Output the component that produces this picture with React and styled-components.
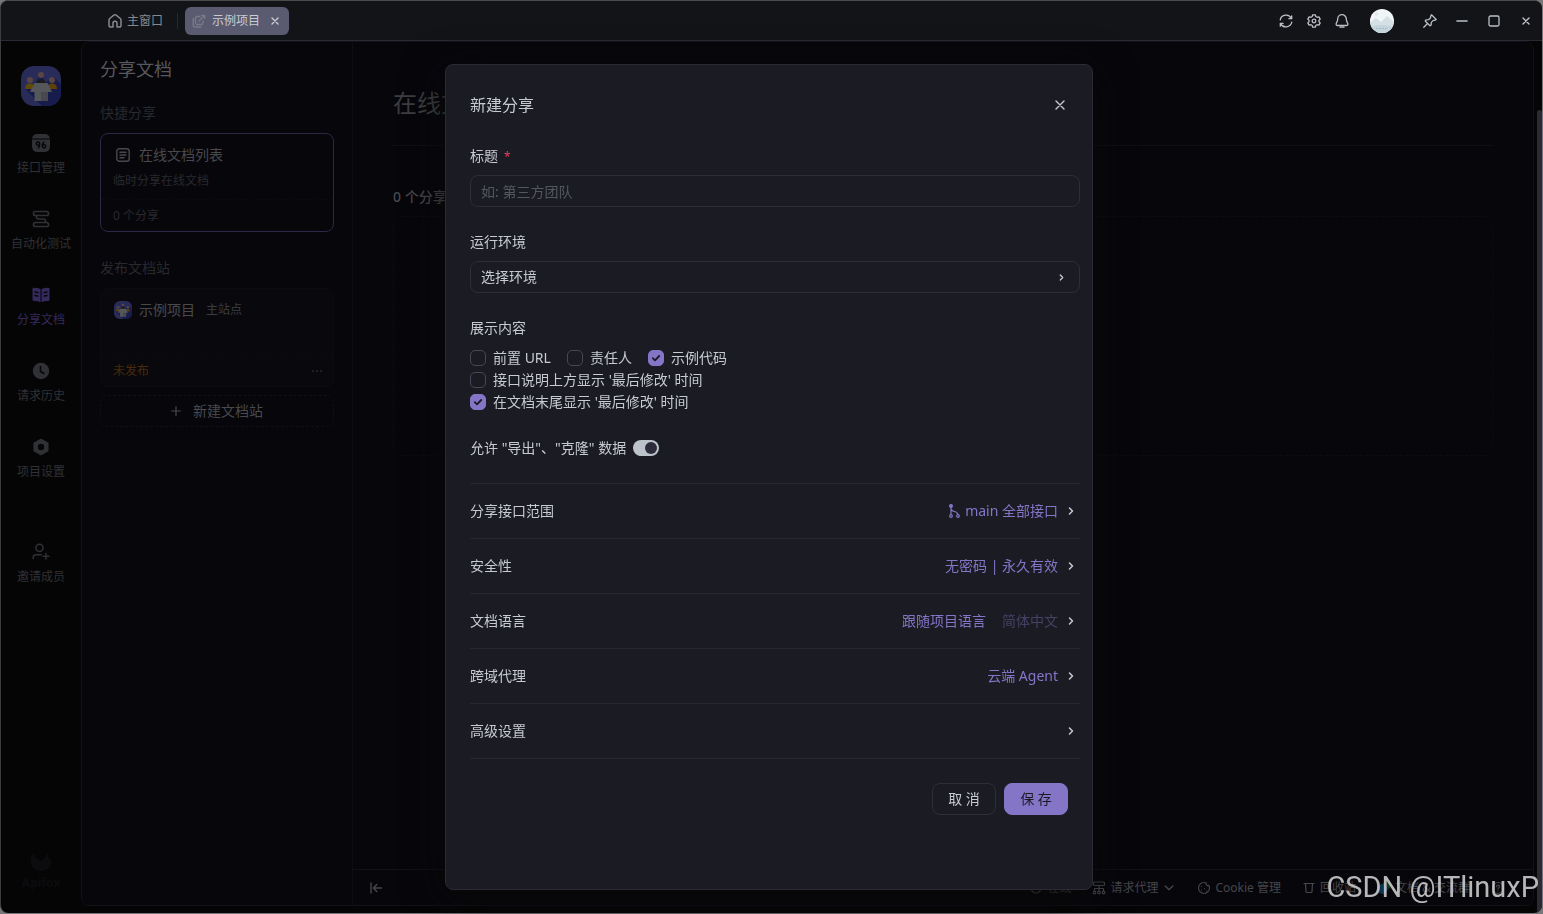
import { useState } from "react";
import styled, { createGlobalStyle } from "styled-components";

const navItems = [
  { key: "api", label: "接口管理", icon: <ApiIcon /> },
  { key: "test", label: "自动化测试", icon: <TestIcon /> },
  { key: "share", label: "分享文档", icon: <BookIcon />, active: true },
  { key: "history", label: "请求历史", icon: <ClockIcon /> },
  { key: "settings", label: "项目设置", icon: <HexIcon /> },
];

function App() {
  return (
    <>
      <GlobalStyle />
      <Window>
        <TitleBar />
        <Body>
          <SideNav />
          <Panel>
            <DocSidebar />
            <MainArea />
          </Panel>
          <ScrollTrack>
            <ScrollThumb />
          </ScrollTrack>
        </Body>
      </Window>
      <Overlay>
        <ShareDialog />
      </Overlay>
      <Watermark>CSDN @ITlinuxP</Watermark>
    </>
  );
}

function TitleBar() {
  return (
    <TitleBarWrapper>
      <Tabs>
        <HomeTab>
          <HomeIcon />
          主窗口
        </HomeTab>
        <TabDivider />
        <ProjectTab>
          <OpenIcon />
          <span>示例项目</span>
          <PlainButton aria-label="关闭标签">
            <CloseIcon size={8} />
          </PlainButton>
        </ProjectTab>
      </Tabs>
      <Actions>
        <ActionGroup>
          <PlainButton aria-label="刷新">
            <RefreshIcon />
          </PlainButton>
          <PlainButton aria-label="设置">
            <GearIcon />
          </PlainButton>
          <PlainButton aria-label="通知">
            <BellIcon />
          </PlainButton>
        </ActionGroup>
        <AvatarButton aria-label="账号">
          <AvatarPicture />
        </AvatarButton>
        <WindowButtons>
          <PlainButton aria-label="置顶">
            <PinIcon />
          </PlainButton>
          <PlainButton aria-label="最小化">
            <MinIcon />
          </PlainButton>
          <PlainButton aria-label="最大化">
            <MaxIcon />
          </PlainButton>
          <PlainButton aria-label="关闭">
            <CloseIcon size={8} />
          </PlainButton>
        </WindowButtons>
      </Actions>
    </TitleBarWrapper>
  );
}

function SideNav() {
  return (
    <Nav>
      <ProjectLogo size={40} />
      <NavList>
        {navItems.map((item) => (
          <NavButton key={item.key} $active={item.active}>
            {item.icon}
            <span>{item.label}</span>
          </NavButton>
        ))}
      </NavList>
      <NavButton>
        <InviteIcon />
        <span>邀请成员</span>
      </NavButton>
      <Brand>
        <FoxIcon />
        <span>Apifox</span>
      </Brand>
    </Nav>
  );
}

function DocSidebar() {
  return (
    <Sidebar>
      <SidebarTitle>分享文档</SidebarTitle>
      <GroupTitle>快捷分享</GroupTitle>
      <Card $selected>
        <CardTop>
          <CardName>
            <IconBox>
              <DocIcon />
            </IconBox>
            在线文档列表
          </CardName>
          <CardHint>临时分享在线文档</CardHint>
        </CardTop>
        <CardBottom>0 个分享</CardBottom>
      </Card>
      <GroupTitle $spaced>发布文档站</GroupTitle>
      <Card>
        <CardTop>
          <CardName>
            <ProjectLogo size={18} />
            示例项目
            <SiteTag>主站点</SiteTag>
          </CardName>
        </CardTop>
        <CardBottom>
          <Unpublished>未发布</Unpublished>
          <PlainButton aria-label="更多">
            <DotsIcon />
          </PlainButton>
        </CardBottom>
      </Card>
      <NewSiteButton>
        <PlusIcon />
        新建文档站
      </NewSiteButton>
    </Sidebar>
  );
}

function MainArea() {
  return (
    <Main>
      <Content>
        <PageTitle>在线文档列表</PageTitle>
        <ShareCount>0 个分享</ShareCount>
        <EmptyBox />
      </Content>
      <Footer>
        <PlainButton aria-label="收起侧栏">
          <CollapseIcon />
        </PlainButton>
        <FooterItems>
          <FooterButton>
            <OnlineIcon />
            在线
          </FooterButton>
          <FooterButton>
            <ProxyIcon />
            请求代理
            <FooterArrow>
              <ChevronDown />
            </FooterArrow>
          </FooterButton>
          <FooterButton>
            <CookieIcon />
            Cookie 管理
          </FooterButton>
          <FooterButton>
            <TrashIcon />
            回收站
          </FooterButton>
          <FooterButton>
            <CommunityIcon />
            文档 &amp; 交流群
          </FooterButton>
          <FooterButton aria-label="帮助">
            <HelpIcon />
          </FooterButton>
        </FooterItems>
      </Footer>
    </Main>
  );
}

function ShareDialog() {
  const [exportable, setExportable] = useState(true);

  return (
    <Dialog role="dialog" aria-labelledby="share-title">
      <DialogHeader>
        <DialogTitle id="share-title">新建分享</DialogTitle>
        <CloseButton aria-label="关闭">
          <CloseIcon size={10} />
        </CloseButton>
      </DialogHeader>

      <Field>
        <FieldLabel htmlFor="share-name">
          标题<Required>*</Required>
        </FieldLabel>
        <TextInput id="share-name" placeholder="如: 第三方团队" />
      </Field>

      <Field>
        <FieldLabel htmlFor="share-env">运行环境</FieldLabel>
        <SelectBox>
          <Select id="share-env" defaultValue="">
            <option value="">选择环境</option>
          </Select>
          <SelectArrow>
            <ChevronRight size={5} />
          </SelectArrow>
        </SelectBox>
      </Field>

      <Fieldset>
        <Legend>展示内容</Legend>
        <CheckRow>
          <CheckOption label="前置 URL" />
          <CheckOption label="责任人" />
          <CheckOption label="示例代码" checked />
        </CheckRow>
        <CheckRow>
          <CheckOption label="接口说明上方显示 '最后修改' 时间" />
        </CheckRow>
        <CheckRow>
          <CheckOption label="在文档末尾显示 '最后修改' 时间" checked />
        </CheckRow>
      </Fieldset>

      <SwitchLabel>
        允许 "导出"、"克隆" 数据
        <Switch
          type="checkbox"
          role="switch"
          checked={exportable}
          onChange={(e) => setExportable(e.target.checked)}
        />
      </SwitchLabel>

      <Settings>
        <SettingRow label="分享接口范围">
          <BranchIcon />
          <span>main 全部接口</span>
        </SettingRow>
        <SettingRow label="安全性">
          <span>无密码 | 永久有效</span>
        </SettingRow>
        <SettingRow label="文档语言">
          <span>跟随项目语言</span>
          <Muted>简体中文</Muted>
        </SettingRow>
        <SettingRow label="跨域代理">
          <span>云端 Agent</span>
        </SettingRow>
        <SettingRow label="高级设置" />
      </Settings>

      <DialogFooter>
        <Button>取 消</Button>
        <Button $primary>保 存</Button>
      </DialogFooter>
    </Dialog>
  );
}

function CheckOption({ label, checked = false }) {
  const [on, setOn] = useState(checked);
  return (
    <CheckLabel>
      <CheckWrap>
        <Checkbox
          type="checkbox"
          checked={on}
          onChange={(e) => setOn(e.target.checked)}
        />
        {on && <CheckMark />}
      </CheckWrap>
      {label}
    </CheckLabel>
  );
}

function SettingRow({ label, children }) {
  return (
    <SettingButton>
      <span>{label}</span>
      <SettingValue>
        {children}
        <RowArrow>
          <ChevronRight size={6} />
        </RowArrow>
      </SettingValue>
    </SettingButton>
  );
}

/* icons */

function Svg({ size = 14, width = 1.2, children }) {
  return (
    <svg
      width={size}
      height={size}
      viewBox={`0 0 ${size} ${size}`}
      fill="none"
      stroke="currentColor"
      strokeWidth={width}
      strokeLinecap="round"
      strokeLinejoin="round"
      aria-hidden="true"
    >
      {children}
    </svg>
  );
}

function HomeIcon() {
  return (
    <Svg width={1.5}>
      <path d="M5 13H2.8Q1 13 1 11.2V6Q1 5.1 1.7 4.5L5.8 1.2Q7 .4 8.2 1.2L12.3 4.5Q13 5.1 13 6V11.2Q13 13 11.2 13H9V9.2A2 2 0 0 0 5 9.2Z" />
    </Svg>
  );
}

function OpenIcon() {
  return (
    <Svg width={1.3}>
      <path d="M8 2.5H5Q3.5 2.5 3.5 4V9Q3.5 10.5 5 10.5H9.5Q11 10.5 11 9V7M1.2 4.5V11Q1.2 13 3.2 13H9M7 7L12.5 1.5M9.5 1.3H12.7V4.5" />
    </Svg>
  );
}

function CloseIcon({ size }) {
  const end = size - 1;
  return (
    <Svg size={size} width={1.4}>
      <path d={`M1 1L${end} ${end}M${end} 1L1 ${end}`} />
    </Svg>
  );
}

function RefreshIcon() {
  return (
    <Svg width={1.3}>
      <path d="M1.2 5.8A6 6 0 0 1 12.4 4.4M12.8 8.2A6 6 0 0 1 1.6 9.6M12.7 1.8V4.7H9.9M1.3 12.2V9.3H4.1" />
    </Svg>
  );
}

function GearIcon() {
  return (
    <Svg width={1.3}>
      <path d="M5.7.8H8.3L8.8 2.5L10.1 3.3L11.9 2.9L13.2 5.1L12 6.3V7.7L13.2 8.9L11.9 11.1L10.1 10.7L8.8 11.5L8.3 13.2H5.7L5.2 11.5L3.9 10.7L2.1 11.1L.8 8.9L2 7.7V6.3L.8 5.1L2.1 2.9L3.9 3.3L5.2 2.5Z" />
      <circle cx="7" cy="7" r="1.8" />
    </Svg>
  );
}

function BellIcon() {
  return (
    <Svg width={1.3}>
      <path d="M2.7 5A4.3 4.3 0 0 1 11.3 5C11.3 8 12.9 8.4 12.9 10.2Q12.9 11.5 11.5 11.5H2.5Q1.1 11.5 1.1 10.2C1.1 8.4 2.7 8 2.7 5ZM5 13.2H9" />
    </Svg>
  );
}

function AvatarPicture() {
  return (
    <svg width="24" height="24" viewBox="0 0 24 24" aria-hidden="true">
      <defs>
        <clipPath id="avatar-clip">
          <circle cx="12" cy="12" r="12" />
        </clipPath>
      </defs>
      <g clipPath="url(#avatar-clip)">
        <rect width="24" height="24" fill="#f0f5f7" />
        <circle cx="6.5" cy="5" r="1.8" fill="#dfe8ec" />
        <path d="M0 14L6 9L11 13L17 7L24 13V24H0Z" fill="#d4e0e6" />
        <path d="M0 18Q12 14 24 18V24H0Z" fill="#c3d4dd" />
        <path d="M6 19.5H18" stroke="#a7bbc6" strokeWidth="1" strokeDasharray="2 1" />
      </g>
    </svg>
  );
}

function PinIcon() {
  return (
    <Svg width={1.3}>
      <path d="M8.5.8L13.2 5.5L12 6.3L10.3 6.4L8.3 8.4L8.2 11L7 11.8L2.2 7L3 5.8L5.6 5.7L7.6 3.7L7.7 2ZM4.5 9.5L.8 13.2" />
    </Svg>
  );
}

function MinIcon() {
  return (
    <Svg size={12} width={1.6}>
      <path d="M1 6H11" />
    </Svg>
  );
}

function MaxIcon() {
  return (
    <Svg size={12} width={1.3}>
      <rect x="1" y="1" width="10" height="10" rx="1.5" />
    </Svg>
  );
}

function ProjectLogo({ size }) {
  const id = `logo-clip-${size}`;
  return (
    <svg width={size} height={size} viewBox="0 0 40 40" aria-hidden="true">
      <defs>
        <clipPath id={id}>
          <rect width="40" height="40" rx="13" />
        </clipPath>
      </defs>
      <g clipPath={`url(#${id})`}>
        <rect width="40" height="40" fill="#292c58" />
        <path d="M4 23L21 40H40V18L33 11L24 17L20 6L12 22Z" fill="#171c4c" />
        <circle cx="20" cy="9" r="3" fill="#594644" />
        <circle cx="9" cy="14" r="3" fill="#594644" />
        <circle cx="31" cy="14" r="3" fill="#594644" />
        <path d="M15 19Q15 13 20 13Q25 13 25 19Z" fill="#191b21" />
        <path d="M4 23Q4 17.5 9 17.5Q13 17.5 13.5 20L11.5 23Z" fill="#5f4b05" />
        <path d="M36 23Q36 17.5 31 17.5Q27 17.5 26.5 20L28.5 23Z" fill="#5f4005" />
        <path d="M13.5 17H26.5L31 26H27V35H13.5V26H9Z" fill="#55575b" />
        <path d="M20 26H27V35H20Z" fill="#48494e" />
      </g>
    </svg>
  );
}

function ApiIcon() {
  return (
    <svg width="18" height="18" viewBox="0 0 18 18" fill="none" aria-hidden="true">
      <path d="M0 4.500Q1 0 5 0H13Q17 0 18 4.500Z" fill="currentColor" />
      <path d="M0 5.500H18V12Q18 18 12 18H6Q0 18 0 12Z" fill="currentColor" />
      <g stroke="#060607" strokeWidth="1.4">
        <circle cx="6" cy="9.7" r="1.7" />
        <path d="M7.7 9.7Q7.7 12.5 6 14.3" />
        <circle cx="12" cy="12.3" r="1.7" />
        <path d="M10.3 12.3Q10.3 9.5 12.3 7.7" />
      </g>
    </svg>
  );
}

function TestIcon() {
  return (
    <Svg size={18} width={1.6}>
      <rect x="1.5" y="1.5" width="15" height="4" rx="1.8" />
      <rect x="1.5" y="12.5" width="15" height="4" rx="1.8" />
      <path d="M4.500 5.500V7Q4.500 9 6.500 9H11.500Q13.500 9 13.500 11V12.500" />
    </Svg>
  );
}

function BookIcon() {
  return (
    <svg width="18" height="18" viewBox="0 0 18 18" aria-hidden="true">
      <path
        d="M.5 3Q.5 1.8 2 1.8Q6 1.8 8.5 3V16.2Q6 15 2 15Q.5 15 .5 13.5ZM9.5 3Q12 1.8 16 1.8Q17.5 1.8 17.5 3V13.5Q17.5 15 16 15Q12 15 9.5 16.2Z"
        fill="currentColor"
      />
      <path
        d="M3 6L6 6.7M3 9.5L6 10.2M15 6L12 6.7M15 9.5L12 10.2"
        stroke="#060607"
        strokeWidth="1.3"
        strokeLinecap="round"
      />
    </svg>
  );
}

function ClockIcon() {
  return (
    <svg width="18" height="18" viewBox="0 0 18 18" fill="none" aria-hidden="true">
      <circle cx="9" cy="9" r="8.2" fill="currentColor" />
      <path d="M8.5 4.5V9.5L12 11.5" stroke="#060607" strokeWidth="1.5" strokeLinecap="round" />
    </svg>
  );
}

function HexIcon() {
  return (
    <svg width="18" height="18" viewBox="0 0 18 18" aria-hidden="true">
      <path
        d="M9 1.5L15.8 5.2V12.8L9 16.5L2.2 12.8V5.2Z"
        fill="currentColor"
        stroke="currentColor"
        strokeWidth="1.5"
        strokeLinejoin="round"
      />
      <circle cx="9" cy="9" r="3.2" fill="#060607" />
    </svg>
  );
}

function InviteIcon() {
  return (
    <Svg size={18} width={1.5}>
      <circle cx="7.5" cy="4.8" r="3.6" />
      <path d="M1.2 15.5V14.5Q1.2 11.7 4 11.7H9.5M14 10.5V16M11.2 13.3H16.8" />
    </Svg>
  );
}

function FoxIcon() {
  return (
    <svg width="22" height="22" viewBox="0 0 22 22" aria-hidden="true">
      <path
        d="M4 2Q5 8 9 10Q14 12 16 5L19 3L18 7L21 10Q22 16 17 19.5Q11 23 5 19Q-1 14 1 7Z"
        fill="currentColor"
      />
    </svg>
  );
}

function DocIcon() {
  return (
    <Svg width={1.4}>
      <rect x=".8" y=".8" width="12.4" height="12.4" rx="2.5" />
      <path d="M4 4.2H10M4 7H10M4 9.8H8" />
    </Svg>
  );
}

function DotsIcon() {
  return (
    <svg width="12" height="4" viewBox="0 0 12 4" fill="currentColor" aria-hidden="true">
      <circle cx="2" cy="2" r="1" />
      <circle cx="6" cy="2" r="1" />
      <circle cx="10" cy="2" r="1" />
    </svg>
  );
}

function PlusIcon() {
  return (
    <Svg size={10} width={1.2}>
      <path d="M5 .6V9.4M.6 5H9.4" />
    </Svg>
  );
}

function CollapseIcon() {
  return (
    <Svg width={1.4}>
      <path d="M2 2V12M12.5 7H4.5M7.8 3.5L4.3 7L7.8 10.5" />
    </Svg>
  );
}

function OnlineIcon() {
  return (
    <Svg>
      <circle cx="7" cy="7" r="5" />
    </Svg>
  );
}

function ProxyIcon() {
  return (
    <Svg>
      <rect x="1.5" y="1" width="11" height="3.5" rx="1" />
      <path d="M7 4.5V7.5M2.5 10V7.5H11.5V10M7 7.5V10" />
      <circle cx="2.5" cy="11.5" r="1.3" />
      <circle cx="7" cy="11.5" r="1.3" />
      <circle cx="11.5" cy="11.5" r="1.3" />
    </Svg>
  );
}

function ChevronDown() {
  return (
    <Svg size={10} width={1.3}>
      <path d="M1.2 3L5 6.8L8.8 3" />
    </Svg>
  );
}

function CookieIcon() {
  return (
    <Svg>
      <path d="M7 1.5A5.5 5.5 0 1 0 12.5 7Q12.5 5.5 11.7 4.300Q10.500 5.200 9.600 4.200Q8.600 3.200 9.300 2Q8.300 1.500 7 1.500M4.500 5.500V5.600M4.500 9V9.100M7.500 7.500V7.600M9.500 10V10.100" />
    </Svg>
  );
}

function TrashIcon() {
  return (
    <Svg>
      <path d="M2 2.5H12M3.5 2.5L4 10.5Q4 11.5 5 11.5H9Q10 11.5 10 10.5L10.5 2.5" />
    </Svg>
  );
}

function CommunityIcon() {
  return (
    <svg width="14" height="14" viewBox="0 0 14 14" aria-hidden="true">
      <circle cx="9.5" cy="4.5" r="4" fill="#12391b" />
      <circle cx="5.5" cy="8" r="5" fill="#0b3350" />
    </svg>
  );
}

function HelpIcon() {
  return (
    <Svg>
      <circle cx="7" cy="7" r="5.5" />
      <path d="M5.5 5.7Q5.5 4.2 7 4.2Q8.6 4.2 8.5 5.6Q8.4 6.6 7 7.2V8M7 9.8V9.9" />
    </Svg>
  );
}

function ChevronRight({ size }) {
  return (
    <svg
      width={size}
      height={size + 2}
      viewBox="0 0 6 8"
      fill="none"
      stroke="currentColor"
      strokeWidth="1.5"
      strokeLinecap="round"
      strokeLinejoin="round"
      aria-hidden="true"
    >
      <path d="M1.5 1L4.5 4L1.5 7" />
    </svg>
  );
}

function CheckMark() {
  return (
    <svg width="16" height="16" viewBox="0 0 16 16" fill="none" aria-hidden="true">
      <path
        d="M4.8 8.2L7 10.3L11.2 6"
        stroke="#1b1b24"
        strokeWidth="1.8"
        strokeLinecap="round"
        strokeLinejoin="round"
      />
    </svg>
  );
}

function BranchIcon() {
  return (
    <Svg width={1.2}>
      <circle cx="4" cy="2" r="1.4" fill="currentColor" />
      <path d="M4 3V10.5M4 5Q4.500 7 7.500 7.500Q10.500 8 10.800 10.500" />
      <circle cx="4" cy="12" r="1.3" />
      <circle cx="11" cy="12" r="1.3" />
    </Svg>
  );
}

const GlobalStyle = createGlobalStyle`
  * {
    box-sizing: border-box;
  }

  body {
    margin: 0;
    background: #77777a;
    font-family: "Noto Sans", "Noto Sans CJK SC", sans-serif;
    font-size: 14px;
    line-height: 22px;
    color: #c6cad2;
  }

  button,
  input,
  select {
    font: inherit;
  }
`;

const Window = styled.div`
  display: flex;
  flex-direction: column;
  height: calc(100vh - 1px);
  margin-right: 1px;
  border-left: 1px solid #3c3d41;
  border-top: 1px solid #4a4a4d;
  border-radius: 8px;
  background: #050506;
  overflow: hidden;
`;

const TitleBarWrapper = styled.header`
  display: flex;
  flex-shrink: 0;
  justify-content: space-between;
  align-items: center;
  height: 40px;
  padding: 0 10px 0 107px;
  background: #131418;
  border-bottom: 1px solid #2a2a35;
`;

const Tabs = styled.nav`
  display: flex;
  align-items: center;
  font-size: 12px;
`;

const PlainButton = styled.button`
  display: flex;
  align-items: center;
  justify-content: center;
  padding: 0;
  border: none;
  background: none;
  color: inherit;
  cursor: pointer;
`;

const HomeTab = styled(PlainButton)`
  gap: 5px;
  color: #85888d;
`;

const TabDivider = styled.span`
  width: 1px;
  height: 16px;
  margin: 0 7px 0 14px;
  background: #292a31;
`;

const ProjectTab = styled.div`
  display: flex;
  align-items: center;
  gap: 6px;
  height: 28px;
  padding: 0 10px 0 7px;
  border-radius: 6px;
  background: #5a5a71;
  color: #c9ccd2;

  > svg {
    color: #7b7b88;
  }

  button {
    margin-left: 5px;
  }
`;

const Actions = styled.div`
  display: flex;
  align-items: center;
  color: #bbbfc6;
`;

const ActionGroup = styled.div`
  display: flex;
  gap: 14px;
`;

const AvatarButton = styled(PlainButton)`
  margin: 0 29px 0 21px;
`;

const WindowButtons = styled.div`
  display: flex;
  align-items: center;
  gap: 20px;

  button:first-child {
    margin-right: -1px;
  }

  button:last-child {
    width: 12px;
  }
`;

const Body = styled.div`
  display: flex;
  flex: 1;
  min-height: 0;
  padding-bottom: 7px;
`;

const Nav = styled.nav`
  display: flex;
  flex-direction: column;
  align-items: center;
  width: 80px;
  padding: 25px 0 12px;
`;

const NavList = styled.div`
  display: flex;
  flex-direction: column;
  gap: 32px;
  margin: 28px 0 61px;
`;

const NavButton = styled.button`
  display: flex;
  flex-direction: column;
  align-items: center;
  gap: 6px;
  width: 80px;
  height: 44px;
  padding: 0;
  border: none;
  background: none;
  color: ${({ $active }) => ($active ? "#352a5c" : "#303135")};
  font-size: 12px;
  line-height: 20px;
  cursor: pointer;
`;

const Brand = styled.div`
  display: flex;
  flex-direction: column;
  align-items: center;
  margin-top: auto;
  color: #0c0c0e;
  font-size: 12px;
  font-weight: 700;
`;

const Panel = styled.div`
  display: flex;
  flex: 1;
  border: 1px solid #111117;
  border-radius: 8px;
  background: #07060b;
  overflow: hidden;
`;

const ScrollTrack = styled.div`
  display: flex;
  justify-content: flex-end;
  width: 8px;
  margin-bottom: -7px;
  padding-top: 69px;
`;

const ScrollThumb = styled.div`
  width: 5px;
  border-radius: 3px 3px 0 0;
  background: #2a2a36;
`;

const Sidebar = styled.aside`
  width: 271px;
  flex-shrink: 0;
  padding: 15px 18px;
  border-right: 1px solid #0e0d13;
`;

const SidebarTitle = styled.h2`
  margin: 0 0 21px;
  color: #57585b;
  font-size: 18px;
  font-weight: 400;
  line-height: 24px;
`;

const GroupTitle = styled.h3`
  margin: ${({ $spaced }) => ($spaced ? "25px 0 9px" : "0 0 9px")};
  color: #28292d;
  font-size: 14px;
  font-weight: 400;
  line-height: 22px;
`;

const Card = styled.div`
  height: 99px;
  border: 1px solid ${({ $selected }) => ($selected ? "#2d2748" : "#0c0c10")};
  border-radius: 8px;
  background: ${({ $selected }) => ($selected ? "transparent" : "#09090d")};
`;

const CardTop = styled.div`
  height: 66px;
  padding: 10px 12px 0;
  border-bottom: 1px dashed #0b0b10;
`;

const CardName = styled.div`
  display: flex;
  align-items: center;
  gap: 7px;
  padding-left: 1px;
  color: #47494d;
`;

const IconBox = styled.span`
  display: flex;
  justify-content: center;
  width: 18px;
`;

const CardHint = styled.p`
  margin: 5px 0 0;
  color: #28292d;
  font-size: 12px;
  line-height: 20px;
`;

const CardBottom = styled.div`
  display: flex;
  justify-content: space-between;
  align-items: center;
  height: 32px;
  padding: 0 10px 0 12px;
  color: #28292d;
  font-size: 12px;
`;

const SiteTag = styled.span`
  margin-left: 4px;
  color: #3b3d41;
  font-size: 12px;
`;

const Unpublished = styled.span`
  color: #492b0a;
`;

const NewSiteButton = styled.button`
  display: flex;
  align-items: center;
  justify-content: center;
  gap: 12px;
  width: 100%;
  height: 32px;
  margin-top: 8px;
  border: 1px dashed #101015;
  border-radius: 8px;
  background: none;
  color: #47494d;
  cursor: pointer;
`;

const Main = styled.main`
  display: flex;
  flex: 1;
  flex-direction: column;
  min-width: 0;
`;

const Content = styled.div`
  flex: 1;
  padding: 0 40px;
`;

const PageTitle = styled.h1`
  margin: 0;
  padding: 43px 0 24px;
  border-bottom: 1px solid #101014;
  color: #3d3e41;
  font-size: 24px;
  font-weight: 400;
  line-height: 36px;
`;

const ShareCount = styled.h4`
  margin: 40px 0 8px;
  color: #47484b;
  font-size: 14px;
  font-weight: 500;
`;

const EmptyBox = styled.div`
  height: 240px;
  border: 1px dashed #0d0d11;
  border-radius: 8px;
`;

const Footer = styled.footer`
  display: flex;
  justify-content: space-between;
  align-items: center;
  height: 36px;
  padding: 0 28px 0 16px;
  border-top: 1px solid #111116;
  color: #45474b;
`;

const FooterItems = styled.div`
  display: flex;
  gap: 21px;
`;

const FooterButton = styled(PlainButton)`
  gap: 4px;
  font-size: 12px;
`;

const FooterArrow = styled.span`
  display: flex;
  padding: 0 2px;
`;

const Overlay = styled.div`
  position: fixed;
  inset: 40px 5px 0 0;
  display: flex;
  justify-content: center;
  padding: 24px;
`;

const Dialog = styled.section`
  width: 648px;
  padding: 24px 12px 24px 24px;
  border: 1px solid #2b2b38;
  border-radius: 8px;
  background: #1b1b24;
  box-shadow: 0 8px 40px rgba(9, 9, 9, 0.9);
  overflow: auto;
`;

const DialogHeader = styled.div`
  display: flex;
  justify-content: space-between;
  align-items: center;
  height: 32px;
`;

const DialogTitle = styled.h2`
  margin: 0;
  font-size: 16px;
  font-weight: 400;
`;

const CloseButton = styled(PlainButton)`
  width: 40px;
  height: 32px;
`;

const Field = styled.div`
  display: flex;
  flex-direction: column;
  gap: 8px;
  margin-top: 24px;
`;

const FieldLabel = styled.label`
  line-height: 22px;
`;

const Required = styled.span`
  margin-left: 6px;
  color: #e5405e;
  font-size: 12px;
  line-height: 16px;
`;

const TextInput = styled.input`
  width: 100%;
  height: 32px;
  padding: 0 10px;
  border: 1px solid #2d2e3a;
  border-radius: 8px;
  outline: none;
  background: transparent;
  color: #c6cad2;

  &::placeholder {
    color: #535860;
  }
`;

const SelectBox = styled.div`
  position: relative;
`;

const Select = styled.select`
  display: block;
  width: 100%;
  height: 32px;
  padding: 0 10px;
  border: 1px solid #2d2e3a;
  border-radius: 8px;
  appearance: none;
  background: transparent;
  color: #c6cad2;
`;

const SelectArrow = styled.span`
  position: absolute;
  top: 0;
  right: 16px;
  display: flex;
  align-items: center;
  height: 32px;
  pointer-events: none;
`;

const Fieldset = styled.fieldset`
  margin: 24px 0 0;
  padding: 0;
  border: none;
`;

const Legend = styled.legend`
  padding: 0;
  margin-bottom: 8px;
`;

const CheckRow = styled.div`
  display: flex;
  gap: 16px;
`;

const CheckLabel = styled.label`
  display: flex;
  align-items: center;
  gap: 7px;
  cursor: pointer;
`;

const CheckWrap = styled.span`
  display: grid;

  > * {
    grid-area: 1 / 1;
    pointer-events: none;
  }
`;

const Checkbox = styled.input`
  width: 16px;
  height: 16px;
  margin: 0;
  border: 1px solid #474757;
  border-radius: 5px;
  appearance: none;

  &:checked {
    border-color: #8475c7;
    background: #8475c7;
  }
`;

const SwitchLabel = styled.label`
  display: flex;
  align-items: center;
  gap: 7px;
  margin: 24px 0;
`;

const Switch = styled.input`
  display: flex;
  align-items: center;
  width: 26px;
  height: 16px;
  margin: 0;
  padding: 2px;
  border-radius: 8px;
  appearance: none;
  background: #454854;

  &::before {
    content: "";
    width: 12px;
    height: 12px;
    border-radius: 50%;
    background: #2c2c3a;
  }

  &:checked {
    justify-content: flex-end;
    background: #bcc3cb;
  }
`;

const Settings = styled.div`
  border-bottom: 1px solid #262733;
`;

const SettingButton = styled.button`
  display: flex;
  justify-content: space-between;
  align-items: center;
  width: 100%;
  height: 55px;
  padding: 0 6px 0 0;
  border: none;
  border-top: 1px solid #262733;
  background: none;
  color: #c6cad2;
  cursor: pointer;
`;

const SettingValue = styled.span`
  display: flex;
  align-items: center;
  gap: 4px;
  color: #8475c7;
`;

const Muted = styled.span`
  margin-left: 12px;
  color: #464064;
`;

const RowArrow = styled.span`
  display: flex;
  margin-left: 6px;
  color: #c6cad2;
`;

const DialogFooter = styled.div`
  display: flex;
  justify-content: flex-end;
  gap: 8px;
  padding: 24px 12px 0 0;
`;

const Button = styled.button`
  width: 64px;
  height: 32px;
  padding: 0;
  border: 1px solid ${({ $primary }) => ($primary ? "#8475c7" : "#2d2e3a")};
  border-radius: 8px;
  background: ${({ $primary }) => ($primary ? "#8475c7" : "transparent")};
  color: ${({ $primary }) => ($primary ? "#1b1b24" : "#c6cad2")};
  cursor: pointer;
`;

const Watermark = styled.div`
  position: fixed;
  right: 4px;
  bottom: 10px;
  color: rgba(215, 215, 215, 0.85);
  font-family: Roboto, sans-serif;
  font-size: 29px;
  line-height: 34px;
  pointer-events: none;
`;

export default App;
